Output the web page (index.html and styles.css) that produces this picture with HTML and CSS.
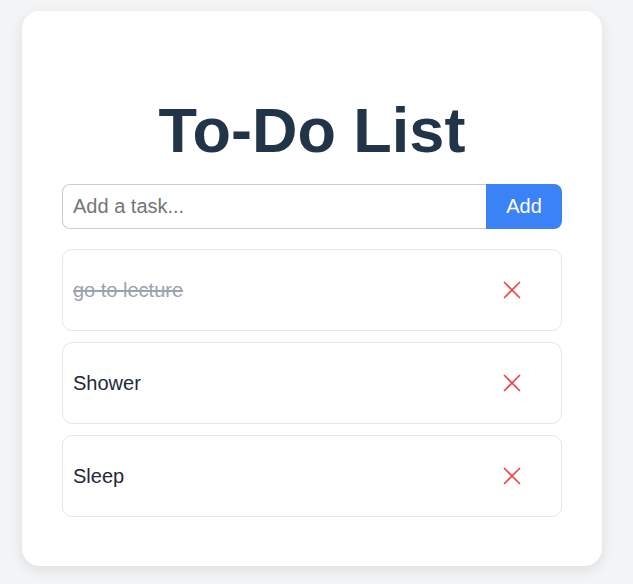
FILE: index.html
```html
<!DOCTYPE html>
<html lang="en">
<head>
<meta charset="utf-8">
<title>To-Do List</title>
<link rel="stylesheet" href="styles.css">
</head>
<body>
<main class="card">
  <h1 class="title">To-Do List</h1>
  <form class="add-form">
    <input class="task-input" type="text" placeholder="Add a task...">
    <button class="add-btn" type="button">Add</button>
  </form>
  <ul class="task-list">
    <li class="task">
      <span class="task-text done">go to lecture</span>
      <button class="del-btn" type="button" aria-label="Delete">
        <svg width="18" height="18" viewBox="0 0 18 18"><path d="M1 1L17 17M17 1L1 17" stroke="#ef4444" stroke-width="1.6" fill="none"/></svg>
      </button>
    </li>
    <li class="task">
      <span class="task-text">Shower</span>
      <button class="del-btn" type="button" aria-label="Delete">
        <svg width="18" height="18" viewBox="0 0 18 18"><path d="M1 1L17 17M17 1L1 17" stroke="#ef4444" stroke-width="1.6" fill="none"/></svg>
      </button>
    </li>
    <li class="task">
      <span class="task-text">Sleep</span>
      <button class="del-btn" type="button" aria-label="Delete">
        <svg width="18" height="18" viewBox="0 0 18 18"><path d="M1 1L17 17M17 1L1 17" stroke="#ef4444" stroke-width="1.6" fill="none"/></svg>
      </button>
    </li>
  </ul>
</main>
</body>
</html>
```

FILE: styles.css
```css
* {
  box-sizing: border-box;
}

html, body {
  margin: 0;
  background: #f3f4f6;
}

body {
  font-family: "Liberation Sans", Arial, sans-serif;
  padding: 11px 0 0 22px;
  height: 584px;
}

.card {
  width: 580px;
  background: #ffffff;
  border-radius: 18px;
  box-shadow: 0 4px 14px rgba(0, 0, 0, 0.09);
  padding: 40px 40px 49px 40px;
}

.title {
  margin: 43px 0 17px;
  text-align: center;
  font-size: 63px;
  font-weight: 700;
  color: #223548;
  line-height: 73px;
}

.add-form {
  display: flex;
  height: 45px;
  margin: 0 0 20px;
}

.task-input {
  flex: 1;
  min-width: 0;
  height: 45px;
  border: 1px solid #cccccc;
  border-right: none;
  border-radius: 8px 0 0 8px;
  padding: 0 10px;
  font-family: "Liberation Sans", Arial, sans-serif;
  font-size: 20px;
  color: #1f2937;
  outline: none;
}

.task-input::placeholder {
  color: #757575;
}

.add-btn {
  width: 76px;
  height: 45px;
  border: none;
  border-radius: 0 8px 8px 0;
  background: #3b82f6;
  color: #ffffff;
  font-family: "Liberation Sans", Arial, sans-serif;
  font-size: 20px;
  padding: 0;
}

.task-list {
  list-style: none;
  margin: 0;
  padding: 0;
  display: flex;
  flex-direction: column;
  gap: 11px;
}

.task {
  display: flex;
  align-items: center;
  justify-content: space-between;
  height: 82px;
  border: 1px solid #e5e7eb;
  border-radius: 10px;
  padding: 0 40px 0 10px;
}

.task-text {
  font-size: 20px;
  color: #1f2937;
  line-height: 23px;
}

.task-text.done {
  color: #9ca3af;
  text-decoration: line-through;
}

.del-btn {
  border: none;
  background: none;
  padding: 0;
  width: 18px;
  height: 18px;
  display: flex;
  align-items: center;
  justify-content: center;
}

.del-btn svg {
  display: block;
}
```
